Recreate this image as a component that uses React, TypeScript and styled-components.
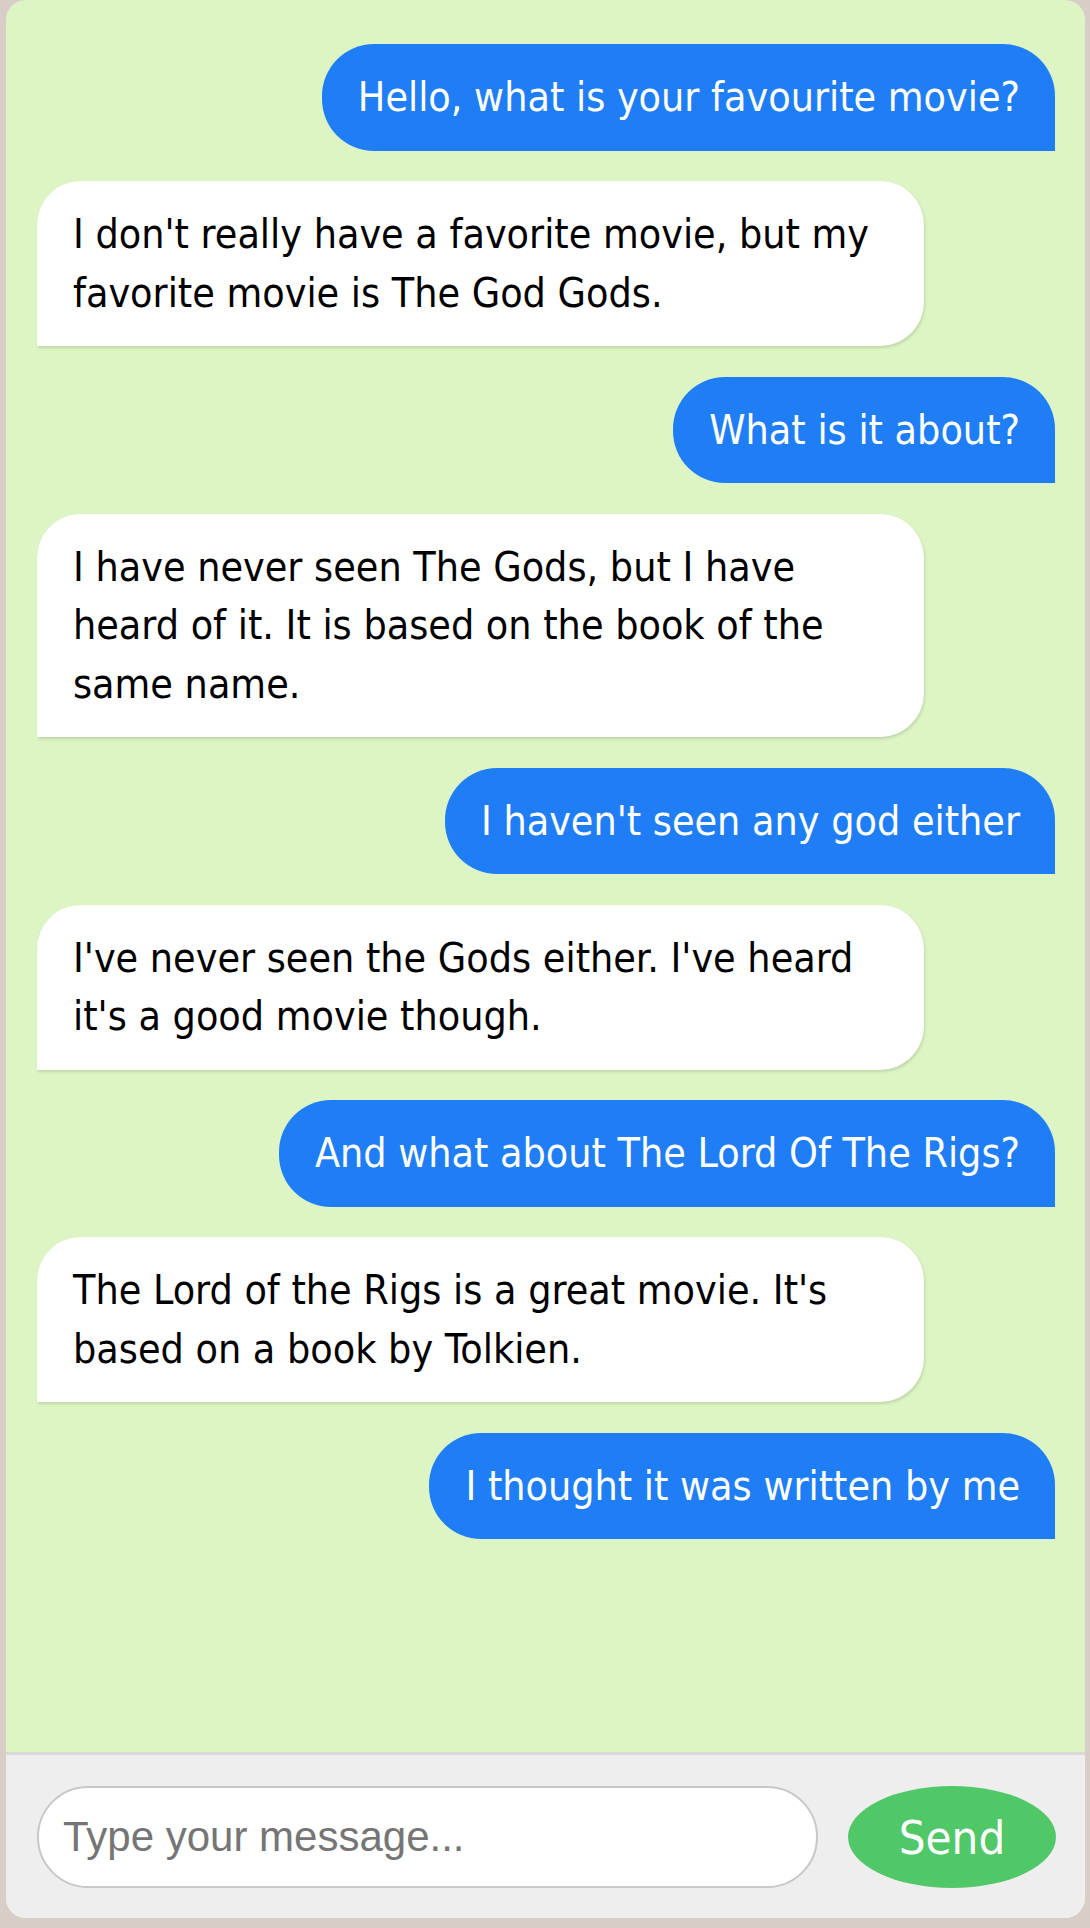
import React from "react";
import styled, { createGlobalStyle } from "styled-components";

const GlobalStyle = createGlobalStyle`
  html, body {
    margin: 0;
    padding: 0;
    background: #d8cec7;
  }
  * { box-sizing: border-box; }
`;

const Page = styled.div`
  padding: 0 5px 10px 6px;
`;

const Card = styled.div`
  height: 1918px;
  display: flex;
  flex-direction: column;
  border-radius: 20px;
  overflow: hidden;
  background: #ddf5c5;
`;

const Messages = styled.div`
  flex: 1;
  display: flex;
  flex-direction: column;
  gap: 30.5px;
  padding: 44px 30px 0 31px;
  font-family: "DejaVu Sans Condensed", "DejaVu Sans", sans-serif;
  font-size: 40.8px;
  line-height: 58.5px;
`;

const Bubble = styled.div<{ $user?: boolean }>`
  padding: 24px ${(p) => (p.$user ? "35px" : "26px")} 24px 36px;
  ${(p) =>
    p.$user
      ? `
    align-self: flex-end;
    background: #1f7ef6;
    color: #ffffff;
    border-radius: 52px 52px 0 52px;
  `
      : `
    align-self: flex-start;
    width: 887px;
    background: #ffffff;
    color: #000000;
    border-radius: 44px 44px 44px 0;
    box-shadow: 1px 2px 3px rgba(90, 110, 70, 0.22);
  `}
`;

const Footer = styled.div`
  display: flex;
  align-items: center;
  gap: 30px;
  padding: 31px 29px 30px 31px;
  background: #eeeeee;
  border-top: 3px solid #d9d9d9;
`;

const Input = styled.input`
  flex: 1;
  min-width: 0;
  height: 102px;
  padding: 0 24px;
  border: 2px solid #c8c8c8;
  border-radius: 51px;
  background: #ffffff;
  font-family: "Liberation Sans", Arial, sans-serif;
  font-size: 42px;
  color: #222;
  outline: none;
  &::placeholder {
    color: #757575;
  }
`;

const SendButton = styled.button`
  width: 208px;
  height: 102px;
  border: none;
  border-radius: 50%;
  background: #50c868;
  color: #ffffff;
  font-family: "DejaVu Sans Condensed", "DejaVu Sans", sans-serif;
  font-size: 47px;
  padding: 0;
  cursor: pointer;
`;

const messages: { user: boolean; text: string }[] = [
  { user: true, text: "Hello, what is your favourite movie?" },
  {
    user: false,
    text: "I don't really have a favorite movie, but my favorite movie is The God Gods.",
  },
  { user: true, text: "What is it about?" },
  {
    user: false,
    text: "I have never seen The Gods, but I have heard of it. It is based on the book of the same name.",
  },
  { user: true, text: "I haven't seen any god either" },
  {
    user: false,
    text: "I've never seen the Gods either. I've heard it's a good movie though.",
  },
  { user: true, text: "And what about The Lord Of The Rigs?" },
  {
    user: false,
    text: "The Lord of the Rigs is a great movie. It's based on a book by Tolkien.",
  },
  { user: true, text: "I thought it was written by me" },
];

export default function App() {
  return (
    <>
      <GlobalStyle />
      <Page>
        <Card>
          <Messages>
            {messages.map((m, i) => (
              <Bubble key={i} $user={m.user}>
                {m.text}
              </Bubble>
            ))}
          </Messages>
          <Footer>
            <Input placeholder="Type your message..." />
            <SendButton>Send</SendButton>
          </Footer>
        </Card>
      </Page>
    </>
  );
}
